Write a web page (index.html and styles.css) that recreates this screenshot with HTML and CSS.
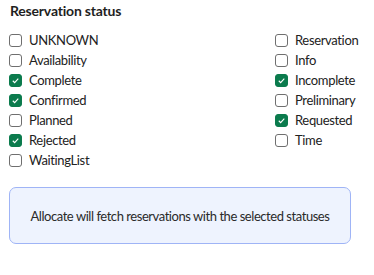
FILE: index.html
```html
<!DOCTYPE html>
<html>
<head>
<meta charset="utf-8">
<link rel="stylesheet" href="styles.css">
</head>
<body>
<div class="panel">
  <h2 class="title">Reservation status</h2>
  <div class="grid">
    <div class="col">
      <label class="opt"><span class="box"></span>UNKNOWN</label>
      <label class="opt"><span class="box"></span>Availability</label>
      <label class="opt"><span class="box on"><svg viewBox="0 0 13 13"><path d="M3.3 6.8 L5.5 9 L9.8 4.4" /></svg></span>Complete</label>
      <label class="opt"><span class="box on"><svg viewBox="0 0 13 13"><path d="M3.3 6.8 L5.5 9 L9.8 4.4" /></svg></span>Confirmed</label>
      <label class="opt"><span class="box"></span>Planned</label>
      <label class="opt"><span class="box on"><svg viewBox="0 0 13 13"><path d="M3.3 6.8 L5.5 9 L9.8 4.4" /></svg></span>Rejected</label>
      <label class="opt"><span class="box"></span>WaitingList</label>
    </div>
    <div class="col">
      <label class="opt"><span class="box"></span>Reservation</label>
      <label class="opt"><span class="box"></span>Info</label>
      <label class="opt"><span class="box on"><svg viewBox="0 0 13 13"><path d="M3.3 6.8 L5.5 9 L9.8 4.4" /></svg></span>Incomplete</label>
      <label class="opt"><span class="box"></span>Preliminary</label>
      <label class="opt"><span class="box on"><svg viewBox="0 0 13 13"><path d="M3.3 6.8 L5.5 9 L9.8 4.4" /></svg></span>Requested</label>
      <label class="opt"><span class="box"></span>Time</label>
    </div>
  </div>
  <div class="info">Allocate will fetch reservations with the selected statuses</div>
</div>
</body>
</html>
```
FILE: styles.css
```css
html, body { margin: 0; padding: 0; background: #fff; }
body { font-family: Lato, "Noto Sans", sans-serif; color: #1f1f1f; }
.panel { padding: 1px 23px 0 9px; width: 342px; }
.title { font-size: 14px; letter-spacing: -0.2px; font-weight: 700; margin: 0 0 9px 1px; line-height: 20px; color: #1f1f1f; }
.grid { display: grid; grid-template-columns: 266px auto; }
.col { display: flex; flex-direction: column; }
.opt { display: flex; align-items: center; height: 20px; font-size: 13px; letter-spacing: -0.35px; color: #222; gap: 7px; }
.box { width: 11px; height: 11px; border: 1px solid #6f6f6f; border-radius: 3px; box-sizing: content-box; display: inline-flex; flex: none; }
.box.on { background: #0b7b4d; border-color: #0b7b4d; }
.box svg { width: 11px; height: 11px; }
.box path { fill: none; stroke: #fff; stroke-width: 1.3; }
.info { margin-top: 17px; height: 55px; border: 1px solid #9fb4f6; border-radius: 7px; background: #eef3fe; display: flex; align-items: center; justify-content: center; font-size: 13px; letter-spacing: -0.45px; color: #2a2a2a; }
```
